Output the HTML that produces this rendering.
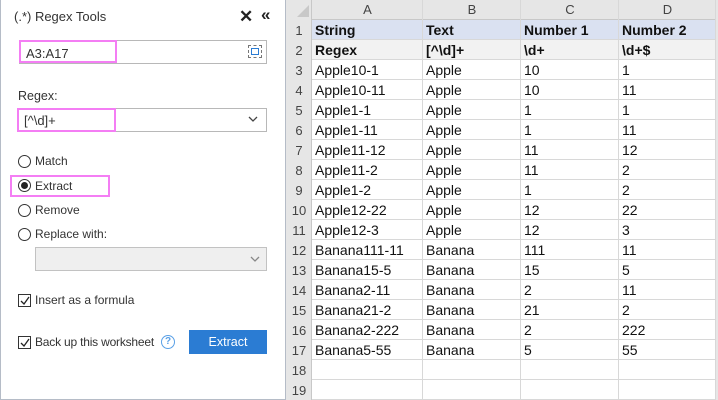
<!DOCTYPE html>
<html><head><style>
*{margin:0;padding:0;box-sizing:border-box}
html,body{width:718px;height:400px;overflow:hidden}
body{background:#fff;font-family:"Liberation Sans",sans-serif;position:relative;color:#222}
.a{position:absolute}
.p{font-size:12px;color:#333}
.rad{position:absolute;width:13px;height:13px;border:1px solid #333;border-radius:50%;background:#fff}
.chk{position:absolute;width:13px;height:13px;border:1px solid #333;background:#fff}
.cell{position:absolute;font-size:14px;line-height:21px;padding-left:3px;color:#111;white-space:nowrap}
.rh{position:absolute;left:286px;width:26px;text-align:center;font-size:13px;line-height:21px;color:#444}
</style></head><body>
<div class="a" style="left:0;top:0;width:286px;height:400px;border-left:1px solid #b5bcc7;border-right:1px solid #b5bcc7;border-bottom:1px solid #b5bcc7;background:#fff"></div>
<div class="a p" style="left:14px;top:9px;font-size:13px;color:#333">(.*) Regex Tools</div>
<div class="a" style="left:239px;top:7px;font-size:17px;font-weight:bold;color:#222">✕</div>
<div class="a" style="left:261px;top:5px;font-size:17px;font-weight:bold;color:#222">«</div>
<div class="a" style="left:19px;top:40px;width:248px;height:24px;border:1px solid #b8b8b8"></div>
<div class="a" style="left:19px;top:40px;width:98px;height:23px;border:2px solid #f47ef4"></div>
<div class="a p" style="left:26px;top:46px;font-size:13px">A3:A17</div>
<div class="a" style="left:248px;top:45px;width:14px;height:13px;border:1px dashed #777"></div>
<div class="a" style="left:251px;top:48px;width:8px;height:7px;border:1.5px solid #2b7cd3"></div>
<div class="a p" style="left:18px;top:89px;font-size:12.5px">Regex:</div>
<div class="a" style="left:17px;top:108px;width:250px;height:24px;border:1px solid #b8b8b8"></div>
<div class="a" style="left:17px;top:108px;width:99px;height:24px;border:2px solid #f47ef4"></div>
<div class="a p" style="left:24px;top:113px;font-size:13px">[^\d]+</div>
<svg class="a" style="left:248px;top:116px" width="10" height="7"><path d="M1 1 L5 5 L9 1" stroke="#444" fill="none" stroke-width="1.3"/></svg>
<div class="rad" style="left:18px;top:155px"></div><div class="a p" style="left:35px;top:154px">Match</div>
<div class="a" style="left:10px;top:175px;width:100px;height:22px;border:2px solid #f47ef4"></div>
<div class="rad" style="left:18px;top:179px"></div><div class="a" style="left:21px;top:182px;width:7px;height:7px;border-radius:50%;background:#222"></div>
<div class="a p" style="left:35px;top:179px">Extract</div>
<div class="rad" style="left:18px;top:204px"></div><div class="a p" style="left:35px;top:203px">Remove</div>
<div class="rad" style="left:18px;top:228px"></div><div class="a p" style="left:35px;top:227px">Replace with:</div>
<div class="a" style="left:35px;top:247px;width:232px;height:24px;border:1px solid #c2c2c2;background:#efefef"></div>
<svg class="a" style="left:250px;top:256px" width="10" height="7"><path d="M1 1 L5 5 L9 1" stroke="#888" fill="none" stroke-width="1.3"/></svg>
<div class="chk" style="left:18px;top:294px"></div><svg class="a" style="left:19px;top:295px" width="12" height="12"><path d="M2 6 L5 9 L10 2" stroke="#222" fill="none" stroke-width="1.3"/></svg>
<div class="a p" style="left:35px;top:293px">Insert as a formula</div>
<div class="chk" style="left:18px;top:336px"></div><svg class="a" style="left:19px;top:337px" width="12" height="12"><path d="M2 6 L5 9 L10 2" stroke="#222" fill="none" stroke-width="1.3"/></svg>
<div class="a p" style="left:35px;top:335px;letter-spacing:-0.2px">Back up this worksheet</div>
<div class="a" style="left:161px;top:335px;width:14px;height:14px;border:1.3px solid #5aa0e6;border-radius:50%;color:#5aa0e6;font-size:10px;text-align:center;line-height:12px;font-weight:bold">?</div>
<div class="a" style="left:189px;top:330px;width:78px;height:24px;background:#2b7cd3;color:#fff;font-size:12.5px;text-align:center;line-height:24px">Extract</div>
<div class="a" style="left:286px;top:0;width:432px;height:20px;background:#e6e6e6;border-bottom:1px solid #c8c8c8"></div>
<div class="a" style="left:286px;top:0;width:26px;height:400px;background:#e6e6e6;border-right:1px solid #c8c8c8"></div>
<div class="a" style="left:716px;top:0;width:2px;height:400px;background:#e6e6e6"></div>
<svg class="a" style="left:296px;top:4px" width="14" height="14"><path d="M13 1 L13 13 L1 13Z" fill="#c8c8c8"/></svg>
<div class="a" style="left:312px;top:20px;width:404px;height:20px;background:#dae1f1"></div>
<div class="a" style="left:312px;top:40px;width:404px;height:20px;background:#f2f2f2"></div>
<div id="g"></div>
<script>
var cols=[312,423,521,619,716],h='';
var L=['A','B','C','D'];
for(var i=0;i<4;i++){h+='<div class="a" style="left:'+cols[i]+'px;top:0;width:'+(cols[i+1]-cols[i])+'px;text-align:center;font-size:13px;line-height:20px;color:#444">'+L[i]+'</div>';}
for(var i=1;i<5;i++)h+='<div class="a" style="left:'+(cols[i]-1)+'px;top:0;width:1px;height:400px;background:#d8d8d8"></div>';
for(var r=1;r<=19;r++){h+='<div class="a" style="left:312px;top:'+(20*r+19)+'px;width:404px;height:1px;background:#d8d8d8"></div>';h+='<div class="rh" style="top:'+(20*r)+'px">'+r+'</div>';}
var d=[["String","Text","Number 1","Number 2"],["Regex","[^\\d]+","\\d+","\\d+$"],
["Apple10-1","Apple","10","1"],["Apple10-11","Apple","10","11"],["Apple1-1","Apple","1","1"],["Apple1-11","Apple","1","11"],["Apple11-12","Apple","11","12"],["Apple11-2","Apple","11","2"],["Apple1-2","Apple","1","2"],["Apple12-22","Apple","12","22"],["Apple12-3","Apple","12","3"],["Banana111-11","Banana","111","11"],["Banana15-5","Banana","15","5"],["Banana2-11","Banana","2","11"],["Banana21-2","Banana","21","2"],["Banana2-222","Banana","2","222"],["Banana5-55","Banana","5","55"]];
for(var r=0;r<d.length;r++)for(var c=0;c<4;c++)h+='<div class="cell" style="left:'+cols[c]+'px;top:'+(20*(r+1))+'px;'+(r<2?'font-weight:bold;':'')+'">'+d[r][c].replace(/</g,'&lt;')+'</div>';
document.getElementById('g').innerHTML=h;
</script>
</body></html>
